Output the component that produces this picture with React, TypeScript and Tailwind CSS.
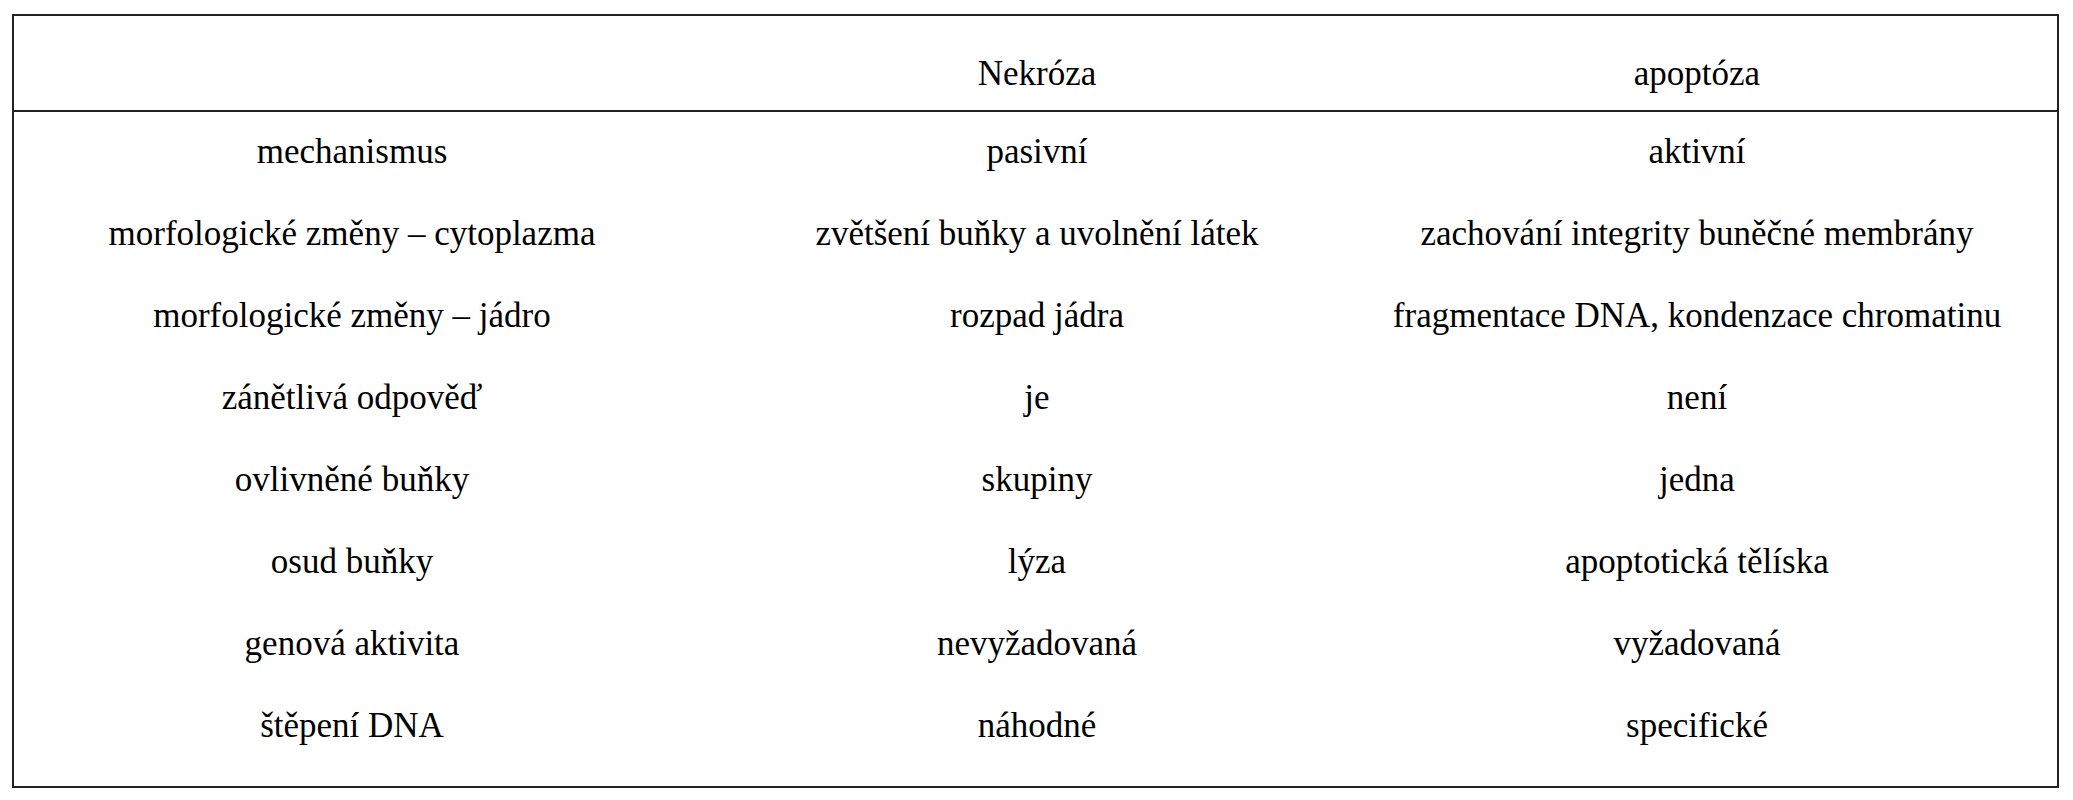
const rows: [string, string, string][] = [
  ['mechanismus', 'pasivní', 'aktivní'],
  ['morfologické změny – cytoplazma', 'zvětšení buňky a uvolnění látek', 'zachování integrity buněčné membrány'],
  ['morfologické změny – jádro', 'rozpad jádra', 'fragmentace DNA, kondenzace chromatinu'],
  ['zánětlivá odpověď', 'je', 'není'],
  ['ovlivněné buňky', 'skupiny', 'jedna'],
  ['osud buňky', 'lýza', 'apoptotická tělíska'],
  ['genová aktivita', 'nevyžadovaná', 'vyžadovaná'],
  ['štěpení DNA', 'náhodné', 'specifické'],
];

const cols = 'grid grid-cols-[676px_694px_626px]';
const cell = "flex items-center justify-center whitespace-nowrap font-['Liberation_Serif'] text-[35px] text-black";

export default function App() {
  return (
    <div className="bg-white pl-[12px] pt-[14px] pb-[12px]">
      <div className="w-[2047px] border-2 border-[#222]">
        {/* header */}
        <div className={`${cols} h-[96px] border-b-2 border-[#222]`}>
          <div />
          <div className={`${cell} pt-[22px]`}>Nekróza</div>
          <div className={`${cell} pt-[22px]`}>apoptóza</div>
        </div>

        {/* body */}
        <div className="pb-[18px]">
          {rows.map((r) => (
            <div key={r[0]} className={`${cols} h-[82px]`}>
              {r.map((text, i) => (
                <div key={i} className={`${cell} pb-[1px]`}>
                  {text}
                </div>
              ))}
            </div>
          ))}
        </div>
      </div>
    </div>
  );
}
